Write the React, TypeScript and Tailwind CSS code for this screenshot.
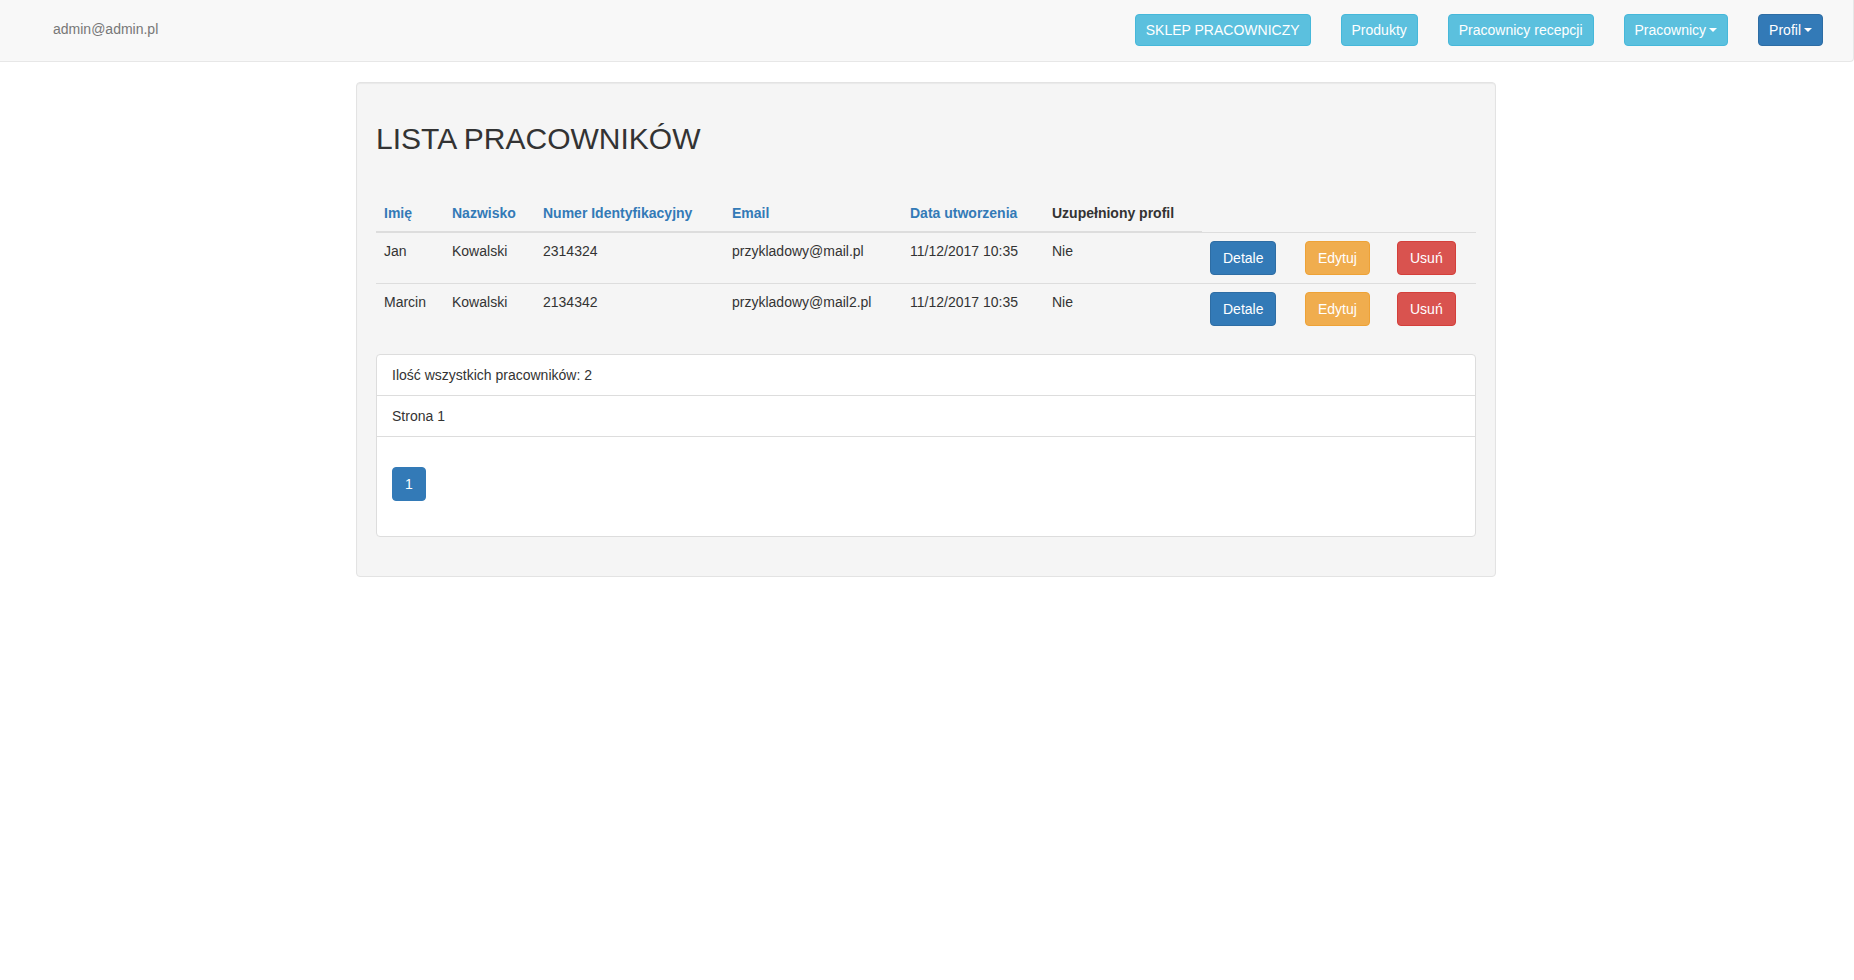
import type { ReactNode } from "react";

const PRACOWNICY = [
  { imie: "Jan", nazwisko: "Kowalski", numer: "2314324", email: "przykladowy@mail.pl", data: "11/12/2017 10:35", profil: "Nie" },
  { imie: "Marcin", nazwisko: "Kowalski", numer: "2134342", email: "przykladowy@mail2.pl", data: "11/12/2017 10:35", profil: "Nie" },
];

const KOLUMNY = ["Imię", "Nazwisko", "Numer Identyfikacyjny", "Email", "Data utworzenia"];

function Caret() {
  return (
    <span className="inline-block w-0 h-0 ml-[3px] align-middle border-t-4 border-x-4 border-x-transparent border-t-white" />
  );
}

function NavBtn({ children, primary }: { children: ReactNode; primary?: boolean }) {
  return (
    <button
      className={
        primary
          ? "h-[32px] px-[10px] border rounded-[4px] text-white text-[14px] leading-[20px] bg-[#337ab7] border-[#2e6da4] flex items-center"
          : "h-[32px] px-[10px] border rounded-[4px] text-white text-[14px] leading-[20px] bg-[#5bc0de] border-[#46b8da] flex items-center"
      }
    >
      {children}
    </button>
  );
}

export default function App() {
  return (
    <div className="min-h-screen bg-white font-['Liberation_Sans',Arial,sans-serif] text-[14px] leading-[20px] text-[#333]">
      <nav className="h-[62px] pb-[2px] flex items-center justify-between bg-[#f8f8f8] border-b border-r border-[#e7e7e7] rounded-br-[4px] pl-[53px] pr-[30px]">
        <span className="text-[#777] mb-[2px]">admin@admin.pl</span>
        <div className="flex items-center gap-[30px]">
          <NavBtn>SKLEP PRACOWNICZY</NavBtn>
          <NavBtn>Produkty</NavBtn>
          <NavBtn>Pracownicy recepcji</NavBtn>
          <NavBtn>
            Pracownicy <Caret />
          </NavBtn>
          <NavBtn primary>
            Profil <Caret />
          </NavBtn>
        </div>
      </nav>

      <main className="w-[1142px] pr-[2px] mx-auto mt-[20px]">
        <div className="border border-[#e3e3e3] bg-[#f5f5f5] rounded-[4px] p-[19px] shadow-[inset_0_1px_1px_rgba(0,0,0,0.05)]">
          <h2 className="mt-[20px] mb-[40px] text-[30px] leading-[33px] font-normal">LISTA PRACOWNIKÓW</h2>

          <table className="w-full table-fixed mb-[20px]">
            <colgroup>
              <col className="w-[68px]" />
              <col className="w-[91px]" />
              <col className="w-[189px]" />
              <col className="w-[178px]" />
              <col className="w-[142px]" />
              <col className="w-[158px]" />
              <col className="w-[95px]" />
              <col className="w-[92px]" />
              <col className="w-[87px]" />
            </colgroup>
            <thead>
              <tr>
                {KOLUMNY.map((k) => (
                  <th key={k} className="text-left font-bold p-[8px] border-b-2 border-[#ddd] text-[#337ab7] whitespace-nowrap">
                    {k}
                  </th>
                ))}
                <th className="text-left font-bold p-[8px] border-b-2 border-[#ddd] whitespace-nowrap">Uzupełniony profil</th>
              </tr>
            </thead>
            <tbody>
              {PRACOWNICY.map((p) => (
                <tr key={p.numer}>
                  <td className="p-[8px] align-top border-t border-[#ddd]">{p.imie}</td>
                  <td className="p-[8px] align-top border-t border-[#ddd]">{p.nazwisko}</td>
                  <td className="p-[8px] align-top border-t border-[#ddd]">{p.numer}</td>
                  <td className="p-[8px] align-top border-t border-[#ddd]">{p.email}</td>
                  <td className="p-[8px] align-top border-t border-[#ddd]">{p.data}</td>
                  <td className="p-[8px] align-top border-t border-[#ddd]">{p.profil}</td>
                  <td className="p-[8px] align-top border-t border-[#ddd]">
                    <div className="flex">
                      <button className="h-[34px] px-[12px] border rounded-[4px] text-white bg-[#337ab7] border-[#2e6da4]">Detale</button>
                    </div>
                  </td>
                  <td className="p-[8px] align-top border-t border-[#ddd]">
                    <div className="flex">
                      <button className="h-[34px] px-[12px] border rounded-[4px] text-white bg-[#f0ad4e] border-[#eea236]">Edytuj</button>
                    </div>
                  </td>
                  <td className="p-[8px] align-top border-t border-[#ddd]">
                    <div className="flex">
                      <button className="h-[34px] px-[12px] border rounded-[4px] text-white bg-[#d9534f] border-[#d43f3a]">Usuń</button>
                    </div>
                  </td>
                </tr>
              ))}
            </tbody>
          </table>

          <div className="bg-white border border-[#ddd] rounded-[4px] mb-[20px]">
            <div className="px-[15px] py-[10px] border-b border-[#ddd]">Ilość wszystkich pracowników: 2</div>
            <div className="px-[15px] py-[10px] border-b border-[#ddd]">Strona 1</div>
            <div className="px-[15px] pt-[30px] pb-[35px]">
              <button className="w-[34px] h-[34px] flex items-center justify-center rounded-[4px] border border-[#337ab7] bg-[#337ab7] text-white">
                1
              </button>
            </div>
          </div>
        </div>
      </main>
    </div>
  );
}
